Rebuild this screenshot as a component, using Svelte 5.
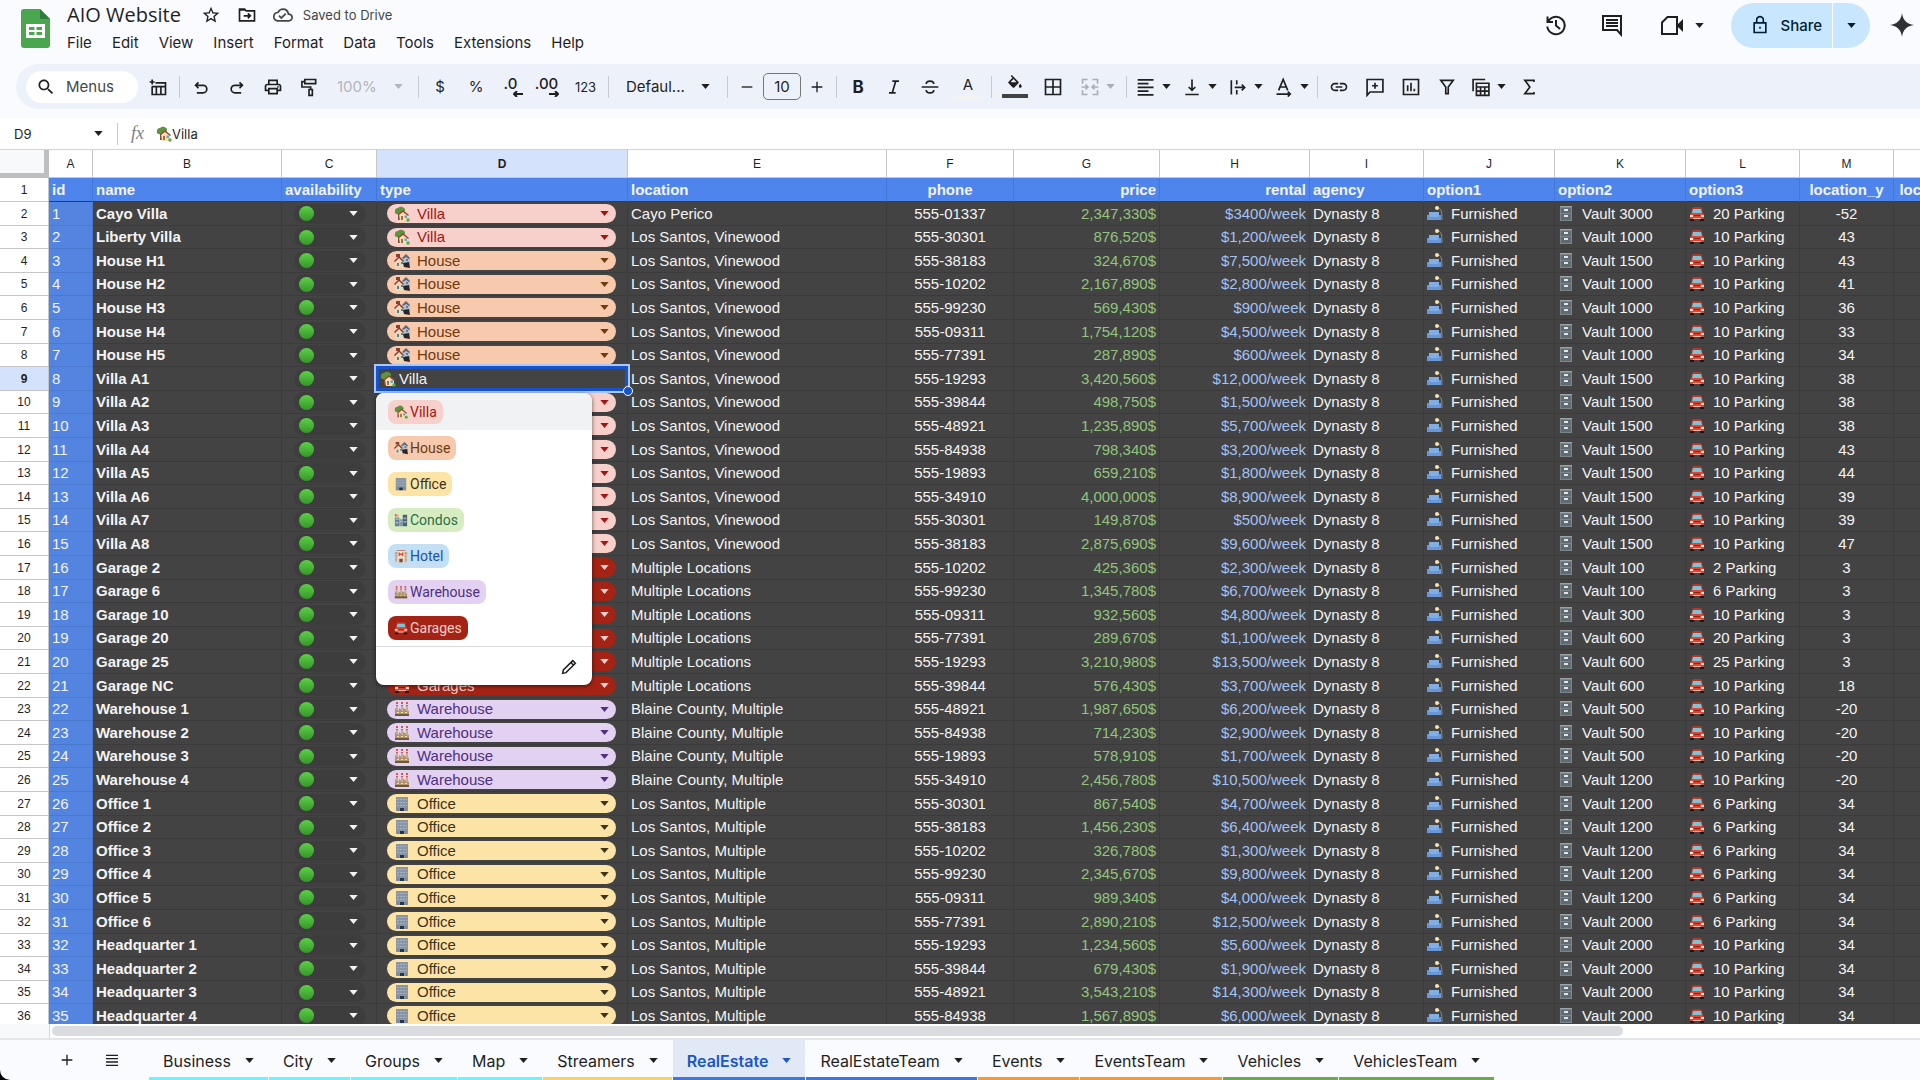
<script>
	const filled = {
		star: 'M22 9.24l-7.19-.62L12 2 9.19 8.63 2 9.24l5.46 4.73L5.82 21 12 17.27 18.18 21l-1.63-7.03L22 9.24zM12 15.4l-3.76 2.27 1-4.28-3.32-2.88 4.38-.38L12 6.1l1.71 4.04 4.38.38-3.32 2.88 1 4.28L12 15.4z',
		cloud: 'M19.35 10.04A7.49 7.49 0 0 0 12 4C9.11 4 6.6 5.64 5.35 8.04A5.994 5.994 0 0 0 0 14c0 3.31 2.69 6 6 6h13c2.76 0 5-2.24 5-5 0-2.64-2.05-4.78-4.65-4.96zM19 18H6c-2.21 0-4-1.79-4-4 0-2.05 1.53-3.76 3.56-3.97l1.07-.11.5-.95A5.469 5.469 0 0 1 12 6c2.62 0 4.88 1.86 5.39 4.43l.3 1.5 1.53.11A2.98 2.98 0 0 1 22 15c0 1.65-1.35 3-3 3zm-9-3.82l-2.09-2.09L6.5 13.5 10 17l6.01-6.01-1.41-1.41z',
		search: 'M15.5 14h-.79l-.28-.27C15.41 12.59 16 11.11 16 9.5 16 5.91 13.09 3 9.5 3S3 5.91 3 9.5 5.91 16 9.5 16c1.61 0 3.09-.59 4.23-1.57l.27.28v.79l5 4.99L20.49 19l-4.99-5zm-6 0C7.01 14 5 11.99 5 9.5S7.01 5 9.5 5 14 7.01 14 9.5 11.99 14 9.5 14z',
		print: 'M19 8h-1V3H6v5H5c-1.66 0-3 1.34-3 3v6h4v4h12v-4h4v-6c0-1.66-1.34-3-3-3zM8 5h8v3H8V5zm8 12v2H8v-4h8v2zm2-2v-2H6v2H4v-4c0-.55.45-1 1-1h14c.55 0 1 .45 1 1v4h-2zM17 11h2v1.5h-2z',
		fill: 'M16.56 8.94L7.62 0 6.21 1.41l2.38 2.38-5.15 5.15c-.59.59-.59 1.54 0 2.12l5.5 5.5c.29.29.68.44 1.06.44s.77-.15 1.06-.44l5.5-5.5c.59-.58.59-1.53 0-2.12zM6 9.5L10 5.21 14 9.5H6zM19 11.5s-2 2.17-2 3.5c0 1.1.9 2 2 2s2-.9 2-2c0-1.33-2-3.5-2-3.5z',
		link: 'M3.9 12c0-1.71 1.39-3.1 3.1-3.1h4V7H7c-2.76 0-5 2.24-5 5s2.24 5 5 5h4v-1.9H7c-1.71 0-3.1-1.39-3.1-3.1zM8 13h8v-2H8v2zm9-6h-4v1.9h4c1.71 0 3.1 1.39 3.1 3.1s-1.39 3.1-3.1 3.1h-4V17h4c2.76 0 5-2.24 5-5s-2.24-5-5-5z',
		spark: 'M12 0c.8 7 5 11.2 12 12-7 .8-11.2 5-12 12-.8-7-5-11.2-12-12 7-.8 11.2-5 12-12z'
	};

	const stroked = {
		folder: 'M3 5h6l2 2h10v12H3zM3 6h7M8 13h8M13 10l3 3-3 3',
		newTable: 'M9 7h12v14H5V11M5 11.500h16M10 12v9M15.500 12v9M5 3v6M2 6h6',
		undo: 'M7 19h7.500a4.500 4.500 0 0 0 0-9H5.500M9 6.500L5.500 10 9 13.500',
		redo: 'M17 19H9.500a4.500 4.500 0 0 1 0-9h9M15 6.500l3.500 3.500-3.500 3.500',
		paint: 'M7 3h13v5H7zM7 5.500H3.500V12H14v3M12 15h4v7h-4z',
		italic: 'M10 5h8M6 19h8M14 5l-4 14',
		strike: 'M2 12h20M16.500 8.500c0-2.500-2-3.500-4.500-3.500S7.500 6 7.500 8.500M7.500 15.500c0 2.300 2 3.500 4.500 3.500s4.500-1.200 4.500-3.500',
		borders: 'M3 3h18v18H3zM12 3v18M3 12h18',
		merge: 'M9 3H3v5M3 16v5h6M15 3h6v5M21 16v5h-6M2 12h7M6.500 9L9.500 12l-3 3M22 12h-7M17.500 9l-3 3 3 3',
		align: 'M2 3.500h19M2 8h13M2 12.500h19M2 17h13M2 21.500h19',
		bottom: 'M12 3v13M8 12l4 4 4-4M4 21h16',
		wrap: 'M4 4v17M10.500 4v5M10.500 15.500V21M8 12.500h12M16.500 9l3.500 3.500-3.500 3.500',
		rotate: 'M5.500 16L11 3l5.500 13M7.500 12h7M3 20.500h16M16.500 17.500l3 3-3 3',
		comment: 'M2.500 22V3h19v15H6zM12 7v7M8.500 10.500h7',
		chart: 'M3 3h18v18H3zM8 10v7M12 7v10M16 14v3',
		filter: 'M4.500 4h15L13.500 12v8h-3v-8z',
		views: 'M2.500 17V3H17M6.500 7.500h15V22h-15zM6.500 12h15M6.500 17h15M11.500 12v10M16.500 12v10',
		sigma: 'M18 6V4H7l6 8-6 8h11v-2',
		history: 'M3.500 3.500V9H9M4 9a8.700 8.700 0 1 1-.7 4.500M12 7v5.500l4 3.500',
		chat: 'M3 3h18v18.500L17 17H3zM6 7h12M6 10h12M6 13h12',
		lock: 'M5 9.500h14V21H5zM8 9V6a4 4 0 0 1 8 0v3M12 14v2.500',
		pencil: 'M3.500 20.500l1-4.500L17 3.500l3.500 3.500L8 19.500zM14.500 6l3.500 3.500',
		plus: 'M12 4v16M4 12h16',
		minus: 'M4 12h16',
		list: 'M3 5h18M3 10h18M3 15h18M3 20h18'
	};

	const menus = ['File', 'Edit', 'View', 'Insert', 'Format', 'Data', 'Tools', 'Extensions', 'Help'];

	const columns = [
		{ letter: 'A', label: 'id', width: 44 },
		{ letter: 'B', label: 'name', width: 189 },
		{ letter: 'C', label: 'availability', width: 95 },
		{ letter: 'D', label: 'type', width: 251 },
		{ letter: 'E', label: 'location', width: 259 },
		{ letter: 'F', label: 'phone', width: 127, align: 'center' },
		{ letter: 'G', label: 'price', width: 146, align: 'right' },
		{ letter: 'H', label: 'rental', width: 150, align: 'right' },
		{ letter: 'I', label: 'agency', width: 114 },
		{ letter: 'J', label: 'option1', width: 131 },
		{ letter: 'K', label: 'option2', width: 131 },
		{ letter: 'L', label: 'option3', width: 114 },
		{ letter: 'M', label: 'location_y', width: 94, align: 'center' },
		{ letter: 'N', label: 'location_x', width: 86, align: 'center' }
	];

	const types = ['Villa', 'House', 'Office', 'Condos', 'Hotel', 'Warehouse', 'Garages'];

	// name, type, location, phone, price, rental, vault, parking, y
	const rows = [
		['Cayo Villa', 'Villa', 'Cayo Perico', '01337', '2,347,330', '3400', 3000, 20, -52],
		['Liberty Villa', 'Villa', 'Los Santos, Vinewood', '30301', '876,520', '1,200', 1000, 10, 43],
		['House H1', 'House', 'Los Santos, Vinewood', '38183', '324,670', '7,500', 1500, 10, 43],
		['House H2', 'House', 'Los Santos, Vinewood', '10202', '2,167,890', '2,800', 1000, 10, 41],
		['House H3', 'House', 'Los Santos, Vinewood', '99230', '569,430', '900', 1000, 10, 36],
		['House H4', 'House', 'Los Santos, Vinewood', '09311', '1,754,120', '4,500', 1000, 10, 33],
		['House H5', 'House', 'Los Santos, Vinewood', '77391', '287,890', '600', 1000, 10, 34],
		['Villa A1', 'Villa', 'Los Santos, Vinewood', '19293', '3,420,560', '12,000', 1500, 10, 38],
		['Villa A2', 'Villa', 'Los Santos, Vinewood', '39844', '498,750', '1,500', 1500, 10, 38],
		['Villa A3', 'Villa', 'Los Santos, Vinewood', '48921', '1,235,890', '5,700', 1500, 10, 38],
		['Villa A4', 'Villa', 'Los Santos, Vinewood', '84938', '798,340', '3,200', 1500, 10, 43],
		['Villa A5', 'Villa', 'Los Santos, Vinewood', '19893', '659,210', '1,800', 1500, 10, 44],
		['Villa A6', 'Villa', 'Los Santos, Vinewood', '34910', '4,000,000', '8,900', 1500, 10, 39],
		['Villa A7', 'Villa', 'Los Santos, Vinewood', '30301', '149,870', '500', 1500, 10, 39],
		['Villa A8', 'Villa', 'Los Santos, Vinewood', '38183', '2,875,690', '9,600', 1500, 10, 47],
		['Garage 2', 'Garages', 'Multiple Locations', '10202', '425,360', '2,300', 100, 2, 3],
		['Garage 6', 'Garages', 'Multiple Locations', '99230', '1,345,780', '6,700', 100, 6, 3],
		['Garage 10', 'Garages', 'Multiple Locations', '09311', '932,560', '4,800', 300, 10, 3],
		['Garage 20', 'Garages', 'Multiple Locations', '77391', '289,670', '1,100', 600, 20, 3],
		['Garage 25', 'Garages', 'Multiple Locations', '19293', '3,210,980', '13,500', 600, 25, 3],
		['Garage NC', 'Garages', 'Multiple Locations', '39844', '576,430', '3,700', 600, 10, 18],
		['Warehouse 1', 'Warehouse', 'Blaine County, Multiple', '48921', '1,987,650', '6,200', 500, 10, -20],
		['Warehouse 2', 'Warehouse', 'Blaine County, Multiple', '84938', '714,230', '2,900', 500, 10, -20],
		['Warehouse 3', 'Warehouse', 'Blaine County, Multiple', '19893', '578,910', '1,700', 500, 10, -20],
		['Warehouse 4', 'Warehouse', 'Blaine County, Multiple', '34910', '2,456,780', '10,500', 1200, 10, -20],
		['Office 1', 'Office', 'Los Santos, Multiple', '30301', '867,540', '4,700', 1200, 6, 34],
		['Office 2', 'Office', 'Los Santos, Multiple', '38183', '1,456,230', '6,400', 1200, 6, 34],
		['Office 3', 'Office', 'Los Santos, Multiple', '10202', '326,780', '1,300', 1200, 6, 34],
		['Office 4', 'Office', 'Los Santos, Multiple', '99230', '2,345,670', '9,800', 1200, 6, 34],
		['Office 5', 'Office', 'Los Santos, Multiple', '09311', '989,340', '4,000', 1200, 6, 34],
		['Office 6', 'Office', 'Los Santos, Multiple', '77391', '2,890,210', '12,500', 2000, 6, 34],
		['Headquarter 1', 'Office', 'Los Santos, Multiple', '19293', '1,234,560', '5,600', 2000, 10, 34],
		['Headquarter 2', 'Office', 'Los Santos, Multiple', '39844', '679,430', '1,900', 2000, 10, 34],
		['Headquarter 3', 'Office', 'Los Santos, Multiple', '48921', '3,543,210', '14,300', 2000, 10, 34],
		['Headquarter 4', 'Office', 'Los Santos, Multiple', '84938', '1,567,890', '6,000', 2000, 10, 34]
	];

	const sheets = [
		{ name: 'Business', color: 'cyan' },
		{ name: 'City', color: 'cyan' },
		{ name: 'Groups', color: 'cyan' },
		{ name: 'Map', color: 'cyan' },
		{ name: 'Streamers', color: 'yellow' },
		{ name: 'RealEstate', color: 'blue' },
		{ name: 'RealEstateTeam', color: 'blue' },
		{ name: 'Events', color: 'orange' },
		{ name: 'EventsTeam', color: 'orange' },
		{ name: 'Vehicles', color: 'green' },
		{ name: 'VehiclesTeam', color: 'green' }
	];

	let activeSheet = $state('RealEstate');
	let selected = $state('Villa');
	let menuOpen = $state(true);
	const activeRow = 7;

	function choose(type) {
		selected = type;
		menuOpen = false;
	}
</script>

{#snippet icon(name)}
	<svg class="icon" viewBox="0 0 24 24" aria-hidden="true">
		{#if filled[name]}
			<path d={filled[name]} fill="currentColor" />
		{:else}
			<path d={stroked[name]} fill="none" stroke="currentColor" stroke-width="2" />
		{/if}
	</svg>
{/snippet}

{#snippet caret()}
	<svg class="caret" viewBox="0 0 10 6" aria-hidden="true"><path d="M0 0h10L5 6z" fill="currentColor" /></svg>
{/snippet}

{#snippet emoji(name)}
	<svg class="emoji" viewBox="0 0 16 16" aria-hidden="true">
		{#if name === 'Villa'}
			<path d="M4 7h2v7H4z" fill="#7a5136" />
			<path d="M1 5a3 3 0 0 1 3-3 4 4 0 0 1 6 0c2 1 1 4-1 4l-4 2C2 9 0 7 1 5z" fill="#5c9440" />
			<path d="M5 8l4-3 5 4v6H6z" fill="#f3e0b4" />
			<path d="M4 8l5-4 6 5-1 1-5-4-4 3z" fill="#9c4733" />
			<path d="M7 10h2v4H7z" fill="#a56a40" />
			<path d="M10.500 9.500h2.500v2.500h-2.500z" fill="#5aa7d8" />
			<circle cx="14" cy="14" r="1.700" fill="#58a83c" />
		{:else if name === 'House'}
			<path d="M9 5l3-3 4 4v6H9z" fill="#b9bfcb" />
			<path d="M8 5l4-4 4 4-1 1-3-2-3 2z" fill="#5b6478" />
			<path d="M1 8l4-4 4 4v7H1z" fill="#efd9b4" />
			<path d="M0 8l5-5 5 5-1 1-4-4-4 4z" fill="#7d3a30" />
			<path d="M2 1h4v3H2z" fill="#8a4038" />
			<path d="M3 10h2v3H3zM7 9h2v2H7zM12 6h2v2h-2z" fill="#4b82ad" />
			<path d="M9 10l6-1 1 6-6-1z" fill="#24262c" />
		{:else if name === 'Office'}
			<path d="M2 1h12v14H2z" fill="#8995a4" />
			<path d="M3 3h2v1H3zM6 3h2v1H6zM9 3h2v1H9zM3 6h2v1H3zM6 6h2v1H6zM9 6h2v1H9zM3 9h2v1H3zM6 9h2v1H6zM9 9h2v1H9zM12 3h1v1h-1zM12 6h1v1h-1zM12 9h1v1h-1z" fill="#a3b2c2" />
			<path d="M6 12h4v3H6z" fill="#293443" />
			<path d="M3 12h2v3H3zM11 12h2v3h-2z" fill="#77899b" />
		{:else if name === 'Condos'}
			<path d="M1 5h5v10H1z" fill="#65809b" />
			<path d="M6 7h4v8H6z" fill="#8798a9" />
			<path d="M10 2h5v13h-5z" fill="#4c6179" />
			<path d="M1 1h2v3H1zM4 2h1v2H4z" fill="#e05a55" />
			<path d="M2 6h1v2H2zM4 6h1v2H4zM2 10h1v2H2zM4 10h1v2H4zM7 9h2v1H7zM11 5h1v2h-1zM13 5h1v2h-1zM11 9h1v2h-1zM13 9h1v2h-1z" fill="#cbdcea" />
		{:else if name === 'Hotel'}
			<path d="M1 5h14v10H1z" fill="#dfb99c" />
			<path d="M4 1h8v14H4z" fill="#f1dec9" />
			<path d="M3 1h10v1H3zM1 4h3v1H1zM12 4h3v1h-3z" fill="#b06d4f" />
			<path d="M6 4v4M10 4v4M6 6h4" stroke="#d84d3f" stroke-width="1.500" />
			<path d="M2 7h1v2H2zM13 7h1v2h-1zM2 11h1v2H2zM13 11h1v2h-1z" fill="#7699b8" />
			<path d="M6 11h4v4H6z" fill="#765044" />
		{:else if name === 'Warehouse'}
			<path d="M1 7l4 3V7l4 3V7l6 3v5H1z" fill="#b1946c" />
			<path d="M2 4h2v5H2zM7 4h2v5H7zM12 4h2v6h-2z" fill="#c3ad8d" />
			<path d="M2 1h2v2H2zM7 1h2v2H7zM12 1h2v2h-2zM2 4h2v1H2zM7 4h2v1H7zM12 4h2v1h-2z" fill="#d4594d" />
			<path d="M3 11h2v1H3zM7 11h2v1H7zM11 11h2v1h-2z" fill="#f2e29a" />
			<path d="M1 13h14v2H1z" fill="#6f5740" />
		{:else if name === 'Garages'}
			<path d="M5 1h6l2 1 1 6H2l1-6z" fill="#b5392b" />
			<path d="M4 3h8l1 4H3z" fill="#7cc4d6" />
			<path d="M1 8l2-1h10l2 1v5H1z" fill="#e5432d" />
			<path d="M1 9h3v2H1zM12 9h3v2h-3z" fill="#fbe9dc" />
			<path d="M5 9h6v1H5z" fill="#8d2318" />
			<path d="M4 12h8v1H4z" fill="#f0b9aa" />
			<path d="M1 13h4v2H1zM11 13h4v2h-4z" fill="#15171b" />
		{:else if name === 'lounge'}
			<path d="M11 2c3 0 4 3 4 12" fill="none" stroke="#8b8f94" />
			<circle cx="10" cy="2" r="2" fill="#fbe3ac" />
			<path d="M2 6h10v6H2z" fill="#82aee6" />
			<path d="M0 9h2l1 2h8l1-2h2v5H0z" fill="#6a97d8" />
		{:else if name === 'cabinet'}
			<path d="M2 0h12v15H2z" fill="#7c878c" />
			<path d="M3 2h10v5H3zM3 8h10v6H3z" fill="#606b71" />
			<path d="M6 3h4v2H6zM6 9h4v2H6z" fill="#e2e6e8" />
			<path d="M2 0h12v1H2z" fill="#98a3a8" />
		{/if}
	</svg>
{/snippet}

{#snippet dropButton(name, label)}
	<button class="tool drop" aria-label={label}>{@render icon(name)}{@render caret()}</button>
{/snippet}

<div class="app">
	<header>
		<svg class="logo" viewBox="0 0 29 39" aria-hidden="true">
			<path d="M3 0h16l10 10v26a3 3 0 0 1-3 3H3a3 3 0 0 1-3-3V3a3 3 0 0 1 3-3z" fill="#4ba650" />
			<path d="M19 0l10 10H19z" fill="#2f7d39" />
			<path d="M5 15h19v14H5z" fill="#fff" />
			<path d="M8 18h5.500v3H8zM15.500 18H21v3h-5.500zM8 23h5.500v3H8zM15.500 23H21v3h-5.500z" fill="#4ba650" />
		</svg>
		<div class="heading">
			<div class="title-row">
				<h1>AIO Website</h1>
				<button class="mini" aria-label="Star">{@render icon('star')}</button>
				<button class="mini" aria-label="Move">{@render icon('folder')}</button>
				<button class="mini saved">{@render icon('cloud')}<span>Saved to Drive</span></button>
			</div>
			<nav>
				{#each menus as menu}
					<button>{menu}</button>
				{/each}
			</nav>
		</div>
		<div class="actions">
			<button aria-label="Version history">{@render icon('history')}</button>
			<button aria-label="Comments">{@render icon('chat')}</button>
			<button class="call" aria-label="Video call">
				<svg class="icon" viewBox="0 0 24 24" aria-hidden="true">
					<path d="M7.500 4H17v17H2V9.500z" fill="none" stroke="currentColor" stroke-width="2" />
					<path d="M17 12l6-6v13l-6-6z" fill="currentColor" />
				</svg>
				{@render caret()}
			</button>
			<div class="share">
				<button class="share-main">{@render icon('lock')}Share</button>
				<button class="share-more" aria-label="Sharing options">{@render caret()}</button>
			</div>
			<button class="gemini" aria-label="Gemini">{@render icon('spark')}</button>
		</div>
	</header>

	<div class="toolbar">
		<label class="search">
			{@render icon('search')}
			<input type="text" placeholder="Menus" aria-label="Search the menus" />
		</label>
		<button class="tool" aria-label="Insert table">{@render icon('newTable')}</button>
		<i class="sep"></i>
		<button class="tool" aria-label="Undo">{@render icon('undo')}</button>
		<button class="tool" aria-label="Redo">{@render icon('redo')}</button>
		<button class="tool" aria-label="Print">{@render icon('print')}</button>
		<button class="tool" aria-label="Paint format">{@render icon('paint')}</button>
		<label class="picker zoom">
			<select aria-label="Zoom" disabled><option>100%</option></select>
			{@render caret()}
		</label>
		<i class="sep"></i>
		<button class="tool">$</button>
		<button class="tool">%</button>
		<button class="tool decimal" aria-label="Decrease decimal places">
			<span>.0</span>
			<svg viewBox="0 0 10 6" aria-hidden="true"><path d="M10 3H1M4 0L1 3l3 3" /></svg>
		</button>
		<button class="tool decimal" aria-label="Increase decimal places">
			<span>.00</span>
			<svg viewBox="0 0 10 6" aria-hidden="true"><path d="M0 3h9M6 0l3 3-3 3" /></svg>
		</button>
		<button class="tool formats">123</button>
		<i class="sep"></i>
		<label class="picker family">
			<select aria-label="Font"><option>Defaul...</option></select>
			{@render caret()}
		</label>
		<i class="sep"></i>
		<button class="tool step" aria-label="Decrease font size">{@render icon('minus')}</button>
		<input class="size" type="text" value="10" aria-label="Font size" />
		<button class="tool step" aria-label="Increase font size">{@render icon('plus')}</button>
		<i class="sep"></i>
		<button class="tool bold">B</button>
		<button class="tool" aria-label="Italic">{@render icon('italic')}</button>
		<button class="tool" aria-label="Strikethrough">{@render icon('strike')}</button>
		<button class="tool swatch light">A</button>
		<i class="sep"></i>
		<button class="tool swatch" aria-label="Fill color">{@render icon('fill')}</button>
		<button class="tool" aria-label="Borders">{@render icon('borders')}</button>
		<button class="tool drop off" aria-label="Merge cells" disabled>{@render icon('merge')}{@render caret()}</button>
		<i class="sep"></i>
		{@render dropButton('align', 'Horizontal align')}
		{@render dropButton('bottom', 'Vertical align')}
		{@render dropButton('wrap', 'Text wrapping')}
		{@render dropButton('rotate', 'Text rotation')}
		<i class="sep"></i>
		<button class="tool" aria-label="Insert link">{@render icon('link')}</button>
		<button class="tool" aria-label="Insert comment">{@render icon('comment')}</button>
		<button class="tool" aria-label="Insert chart">{@render icon('chart')}</button>
		<button class="tool" aria-label="Create a filter">{@render icon('filter')}</button>
		{@render dropButton('views', 'Table views')}
		<button class="tool" aria-label="Functions">{@render icon('sigma')}</button>
	</div>

	<div class="formula">
		<input class="cell-name" type="text" value="D9" aria-label="Name box" />
		<button class="name-more" aria-label="Named ranges">{@render caret()}</button>
		<i class="sep"></i>
		<span class="fx">fx</span>
		{@render emoji('Villa')}
		<input class="content" type="text" value={selected} aria-label="Formula" />
	</div>

	<div class="grid">
		<table>
			<colgroup>
				<col style="width: 49px" />
				{#each columns as col}
					<col style="width: {col.width}px" />
				{/each}
			</colgroup>
			<thead>
				<tr>
					<th class="corner" aria-label="Select all"></th>
					{#each columns as col}
						<th class:active={col.letter === 'D'}>{col.letter}</th>
					{/each}
				</tr>
			</thead>
			<tbody>
				<tr class="labels">
					<th>1</th>
					{#each columns as col}
						<td class={col.align}>{col.label}</td>
					{/each}
				</tr>
				{#each rows as [name, type, location, phone, price, rental, vault, parking, y], i}
					<tr>
						<th class:active={i === activeRow}>{i + 2}</th>
						<td class="id">{i + 1}</td>
						<td class="name">{name}</td>
						<td>
							<button class="status" aria-label="Available"><span class="dot"></span>{@render caret()}</button>
						</td>
						{#if i === activeRow}
							<td class="editing">
								<div class="editor">{@render emoji(selected)}<span>{selected}</span></div>
								<span class="handle"></span>
								{#if menuOpen}
									<div class="menu">
										{#each types as option}
											<button class="option" class:current={option === selected} onclick={() => choose(option)}>
												<span class="tag {option.toLowerCase()}">{@render emoji(option)}{option}</span>
											</button>
										{/each}
										<div class="menu-foot">
											<button aria-label="Edit options">{@render icon('pencil')}</button>
										</div>
									</div>
								{/if}
							</td>
						{:else}
							<td>
								<label class="chip {type.toLowerCase()}">
									{@render emoji(type)}
									<select value={type} aria-label="Type of {name}">
										{#each types as option}
											<option>{option}</option>
										{/each}
									</select>
									{@render caret()}
								</label>
							</td>
						{/if}
						<td>{location}</td>
						<td class="center">555-{phone}</td>
						<td class="right price">{price}$</td>
						<td class="right rental">${rental}/week</td>
						<td>Dynasty 8</td>
						<td><div class="with-emoji">{@render emoji('lounge')}Furnished</div></td>
						<td><div class="with-emoji">{@render emoji('cabinet')}Vault {vault}</div></td>
						<td><div class="with-emoji">{@render emoji('Garages')}{parking} Parking</div></td>
						<td class="center">{y}</td>
						<td></td>
					</tr>
				{/each}
			</tbody>
		</table>
	</div>

	<div class="scroll"><div class="track"><div class="thumb"></div></div></div>

	<footer>
		<button class="sheet-tool" aria-label="Add sheet">{@render icon('plus')}</button>
		<button class="sheet-tool" aria-label="All sheets">{@render icon('list')}</button>
		<div class="sheets">
			{#each sheets as sheet}
				<button class="sheet {sheet.color}" class:open={sheet.name === activeSheet} onclick={() => (activeSheet = sheet.name)}>
					{sheet.name}{@render caret()}
				</button>
			{/each}
		</div>
	</footer>
</div>

<style>
	:global(body) {
		margin: 0;
		background: #000;
	}

	.app {
		display: flex;
		flex-direction: column;
		height: 100vh;
		overflow: hidden;
		background: #fafbfe;
		border-bottom-left-radius: 10px;
		color: #1f1f1f;
		font-family: Inter, Roboto, sans-serif;
		font-size: 15px;
	}

	button,
	input,
	select {
		margin: 0;
		padding: 0;
		border: none;
		background: transparent;
		color: inherit;
		font: inherit;
		opacity: 1;
	}

	select {
		appearance: none;
		outline: none;
	}

	.icon {
		display: block;
		flex: none;
		width: 20px;
		height: 20px;
	}

	.caret {
		flex: none;
		width: 9px;
		height: 5px;
	}

	.emoji {
		flex: none;
		width: 16px;
		height: 16px;
	}

	header {
		display: flex;
		flex: none;
		height: 64px;
	}

	.logo {
		width: 29px;
		height: 39px;
		margin: 9px 17px 0 21px;
	}

	.title-row {
		display: flex;
		align-items: center;
		height: 30px;
	}

	h1 {
		margin: 0 12px 0 0;
		font-family: "Open Sans", sans-serif;
		font-size: 20px;
		font-weight: 400;
		line-height: 28px;
	}

	.mini {
		display: flex;
		align-items: center;
		gap: 10px;
		padding: 0 8px;
	}

	.saved {
		color: #444746;
		font-size: 13px;
	}

	nav {
		display: flex;
		height: 24px;
		gap: 20px;
	}

	.actions {
		display: flex;
		align-items: center;
		height: 50px;
		margin-left: auto;
		gap: 32px;
	}

	.actions .icon {
		width: 24px;
		height: 24px;
	}

	.call {
		display: flex;
		align-items: center;
		margin-left: 4px;
		gap: 11px;
	}

	.share {
		display: flex;
		height: 45px;
		margin-left: -5px;
		overflow: hidden;
		border-radius: 23px;
		color: #001d35;
		gap: 1px;
	}

	.share button {
		display: flex;
		align-items: center;
		background: #c8e6fd;
	}

	.share .icon {
		width: 20px;
		height: 20px;
	}

	.share-main {
		padding: 0 10px 0 19px;
		font-weight: 500;
		gap: 10px;
	}

	.share-more {
		padding: 0 14px;
	}

	.gemini {
		margin: 0 6px 0 -12px;
		color: #303134;
	}

	.toolbar {
		display: flex;
		flex: none;
		align-items: center;
		height: 45px;
		margin: 0 0 9px 16px;
		padding-left: 10px;
		border-radius: 23px 0 0 23px;
		background: #edf2fa;
	}

	.search {
		display: flex;
		align-items: center;
		width: 112px;
		height: 32px;
		margin-right: 2px;
		border-radius: 16px;
		background: #fff;
		box-sizing: border-box;
		padding-left: 10px;
		gap: 10px;
	}

	.search input {
		width: 60px;
	}

	.search input::placeholder {
		color: #444746;
		opacity: 1;
	}

	.tool {
		display: flex;
		flex: none;
		align-items: center;
		justify-content: center;
		width: 36px;
		height: 34px;
	}

	.drop {
		width: 46px;
		gap: 6px;
	}

	.off {
		width: 52px;
		color: #abaeb2;
	}

	.sep {
		flex: none;
		width: 1px;
		height: 22px;
		margin: 0 3px;
		background: #c7cacf;
	}

	.picker {
		display: flex;
		align-items: center;
		justify-content: space-between;
		box-sizing: border-box;
	}

	.zoom {
		width: 88px;
		padding: 0 12px 0 10px;
		color: #b2b5b9;
	}

	.family {
		width: 112px;
		padding: 0 14px;
	}

	.decimal {
		flex-direction: column;
		align-items: center;
		padding-right: 3px;
		font-weight: 500;
	}

	.decimal span {
		line-height: 14px;
	}

	.decimal svg {
		width: 10px;
		height: 6px;
		margin-left: 14px;
		fill: none;
		stroke: currentColor;
		stroke-width: 2;
	}

	.formats {
		width: 39px;
		font-size: 13px;
	}

	.step {
		width: 32px;
	}

	.step .icon {
		width: 16px;
		height: 16px;
	}

	.size {
		width: 38px;
		height: 27px;
		border: 1px solid #747775;
		border-radius: 5px;
		box-sizing: border-box;
		text-align: center;
	}

	.bold {
		font-size: 17px;
		font-weight: 700;
	}

	.swatch {
		flex-direction: column;
		width: 40px;
		gap: 1px;
	}

	.swatch .icon {
		height: 18px;
	}

	.swatch::after {
		content: "";
		width: 26px;
		height: 4px;
		background: #434343;
	}

	.light::after {
		background: #f3f3f3;
	}

	.formula {
		display: flex;
		flex: none;
		align-items: center;
		height: 31px;
		border-bottom: 1px solid #d0d2d4;
		background: #fff;
		font-size: 13px;
	}

	.cell-name {
		width: 80px;
		padding-left: 14px;
	}

	.name-more {
		display: flex;
		margin-right: 11px;
	}

	.fx {
		margin: 0 12px 0 10px;
		color: #7d8084;
		font: italic 18px "Liberation Serif", serif;
	}

	.content {
		flex: 1;
	}

	.grid {
		flex: 1;
		min-height: 0;
		overflow: hidden;
		background: #434343;
		font-family: "Liberation Sans", Arial, sans-serif;
	}

	table {
		width: 100%;
		min-width: 1980px;
		table-layout: fixed;
		border-spacing: 0;
	}

	th,
	td {
		height: 24px;
		box-sizing: border-box;
		padding: 0 3px;
		white-space: nowrap;
	}

	tbody tr:nth-child(5n + 3) > *,
	tbody tr:nth-child(5n) > * {
		height: 23px;
	}

	th {
		border-right: 1px solid #c4c6c8;
		border-bottom: 1px solid #c4c6c8;
		background: #fff;
		font-size: 12px;
		font-weight: 400;
		line-height: 14px;
	}

	thead th {
		height: 28px;
	}

	th.corner {
		border-right: 5px solid #bdbfc1;
		border-bottom: 5px solid #bdbfc1;
		background: #f8f9fa;
	}

	th.active {
		background: #d4e2fb;
		font-weight: 700;
	}

	td {
		border-right: 1px solid #3b3b3b;
		border-bottom: 1px solid #3b3b3b;
		background: #434343;
		color: #f3f3f3;
		line-height: 18px;
	}

	.labels td {
		border-right-color: #4278d8;
		background: #4d85ec;
		font-weight: 700;
	}

	.id {
		border-color: #4a78ce;
		background: #5385e0;
	}

	.name {
		font-weight: 700;
	}

	.center {
		text-align: center;
	}

	.right {
		text-align: right;
	}

	.price {
		color: #93c47d;
	}

	.rental {
		color: #a4c2f4;
	}

	.with-emoji {
		display: flex;
		align-items: center;
		gap: 8px;
	}

	.status {
		display: flex;
		align-items: center;
		justify-content: space-between;
		width: 72px;
		height: 20px;
		margin-left: 9px;
		padding: 0 8px 0 5px;
		border-radius: 10px;
		background: #3d3d3d;
	}

	.dot {
		width: 15px;
		height: 15px;
		border-radius: 50%;
		background: linear-gradient(#5cd046, #36962a);
	}

	.chip {
		display: flex;
		align-items: center;
		height: 19px;
		margin: 0 8px 0 7px;
		padding: 0 7px;
		border-radius: 10px;
		gap: 7px;
	}

	.chip select {
		flex: 1;
		height: 19px;
	}

	.villa {
		background: #f8d0cb;
		color: #a31512;
	}

	.house {
		background: #f7c9ad;
		color: #6f3a0c;
	}

	.office {
		background: #fce4a6;
		color: #3c3219;
	}

	.condos {
		background: #d8ecc1;
		color: #2a7048;
	}

	.hotel {
		background: #c4dff4;
		color: #1a52a2;
	}

	.warehouse {
		background: #e2d1f0;
		color: #502f80;
	}

	.garages {
		background: #a42315;
		color: #f8d0cb;
	}

	.editing {
		position: relative;
	}

	.editor {
		position: absolute;
		inset: -1px;
		display: flex;
		align-items: center;
		border: 3px solid #1653cc;
		background: #434343;
		box-shadow: 0 0 0 2px #a9c8f8;
		padding-left: 1px;
		gap: 3px;
	}

	.handle {
		position: absolute;
		right: -6px;
		bottom: -6px;
		width: 8px;
		height: 8px;
		border: 1px solid #fff;
		border-radius: 50%;
		background: #1653cc;
	}

	.menu {
		position: absolute;
		z-index: 2;
		top: 26px;
		left: -1px;
		width: 216px;
		overflow: hidden;
		border-radius: 8px;
		background: #fff;
		box-shadow: 0 1px 4px rgba(0, 0, 0, 0.6);
		font-family: Roboto, sans-serif;
		font-size: 14px;
	}

	.option {
		display: flex;
		align-items: center;
		width: 100%;
		height: 36px;
		padding-left: 12px;
	}

	.option.current {
		background: #f1f2f4;
	}

	.option:first-child {
		padding-top: 1px;
		height: 37px;
	}

	.tag {
		display: flex;
		align-items: center;
		height: 24px;
		padding: 0 6px;
		border-radius: 8px;
		gap: 2px;
	}

	.tag .emoji {
		width: 14px;
		height: 14px;
	}

	.menu-foot {
		display: flex;
		justify-content: flex-end;
		height: 36px;
		padding: 2px 14px 0 0;
		border-top: 1px solid #dadce0;
		color: #1f1f1f;
	}

	.menu-foot .icon {
		width: 18px;
		height: 18px;
	}

	.scroll {
		flex: none;
		height: 14px;
		padding-left: 49px;
		border-bottom: 2px solid #e4e6e9;
		background: #f8f9fa;
	}

	.track {
		height: 100%;
		border-left: 1px solid #d5d7da;
		background: #fff;
	}

	.thumb {
		width: 84%;
		height: 10px;
		border: 2px solid #fff;
		border-radius: 7px;
		background: #dadce0;
	}

	footer {
		display: flex;
		flex: none;
		align-items: center;
		height: 40px;
		padding-left: 44px;
	}

	.sheet-tool {
		display: flex;
		justify-content: center;
		width: 45px;
	}

	.sheet-tool .icon {
		width: 16px;
		height: 16px;
	}

	.sheets {
		display: flex;
		height: 100%;
		margin-left: 15px;
		gap: 1px;
	}

	.sheet {
		display: flex;
		align-items: center;
		padding: 4px 14px 0;
		border-bottom: 3px solid;
		font-size: 16px;
		gap: 14px;
	}

	.sheet.open {
		background: #e1e9f7;
		color: #1a55c9;
		font-weight: 600;
	}

	.sheet.cyan {
		border-color: #6ff3f8;
	}

	.sheet.yellow {
		border-color: #fbd066;
	}

	.sheet.blue {
		border-color: #3f76d8;
	}

	.sheet.orange {
		border-color: #f39a36;
	}

	.sheet.green {
		border-color: #6fa650;
	}
</style>
